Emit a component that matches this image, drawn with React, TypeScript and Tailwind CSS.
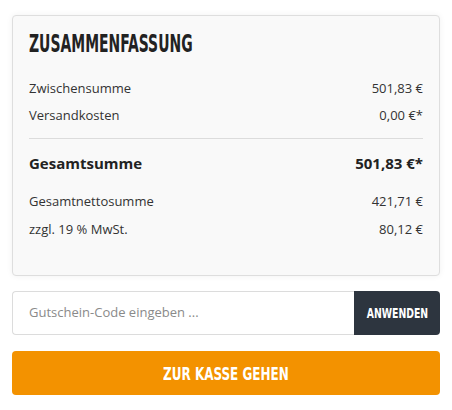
import React from "react";

const heading = { fontFamily: '"DejaVu Sans Condensed", "DejaVu Sans", sans-serif' };

const rows = [
  { label: "Gesamtnettosumme", value: "421,71 €" },
  { label: "zzgl. 19 % MwSt.", value: "80,12 €" },
];

const App = () => {
  return (
    <div className="w-[452px] h-[410px] bg-white px-3 pt-[15px] font-['Open_Sans',sans-serif] text-[#333]">
      <div className="rounded border border-[#dedede] bg-[#f9f9f9] px-4 pt-[16px] pb-[37px] shadow-[0_0_6px_rgba(0,0,0,0.06)]">
        <h2
          className="inline-block origin-left [transform:scaleX(0.62)] whitespace-nowrap text-[25px] font-bold uppercase leading-[24px] text-[#222]"
          style={heading}
        >
          Zusammenfassung
        </h2>
        <div className="mt-[21px] flex flex-col gap-[9px] text-[13px]">
          <div className="flex justify-between leading-[18px]">
            <span>Zwischensumme</span>
            <span>501,83 €</span>
          </div>
          <div className="flex justify-between leading-[18px]">
            <span>Versandkosten</span>
            <span>0,00 €*</span>
          </div>
        </div>
        <div className="mt-[14px] border-t border-[#dcdcdc]" />
        <div className="mt-[13px] flex justify-between text-[15px] font-bold leading-[22px] text-[#222]">
          <span>Gesamtsumme</span>
          <span>501,83 €*</span>
        </div>
        <div className="mt-[18px] flex flex-col gap-[10px] text-[13px]">
          {rows.map((r) => (
            <div key={r.label} className="flex justify-between leading-[18px]">
              <span>{r.label}</span>
              <span>{r.value}</span>
            </div>
          ))}
        </div>
      </div>

      <div className="mt-[15px] flex h-[44px]">
        <input
          className="min-w-0 flex-1 rounded-l border border-r-0 border-[#dcdcdc] bg-white px-4 text-[13px] outline-none placeholder:text-[#8a8a8a]"
          placeholder="Gutschein-Code eingeben ..."
        />
        <button className="flex w-[86px] items-center justify-center rounded-r bg-[#2d353f] text-white">
          <span
            className="inline-block [transform:scaleX(0.74)] text-[14px] font-bold uppercase"
            style={heading}
          >
            Anwenden
          </span>
        </button>
      </div>

      <button className="mt-4 flex h-[44px] w-full items-center justify-center rounded bg-[#f39200] text-white">
        <span
          className="inline-block [transform:scaleX(0.74)] text-[18px] font-bold uppercase"
          style={heading}
        >
          Zur Kasse gehen
        </span>
      </button>
    </div>
  );
};

export default App;
